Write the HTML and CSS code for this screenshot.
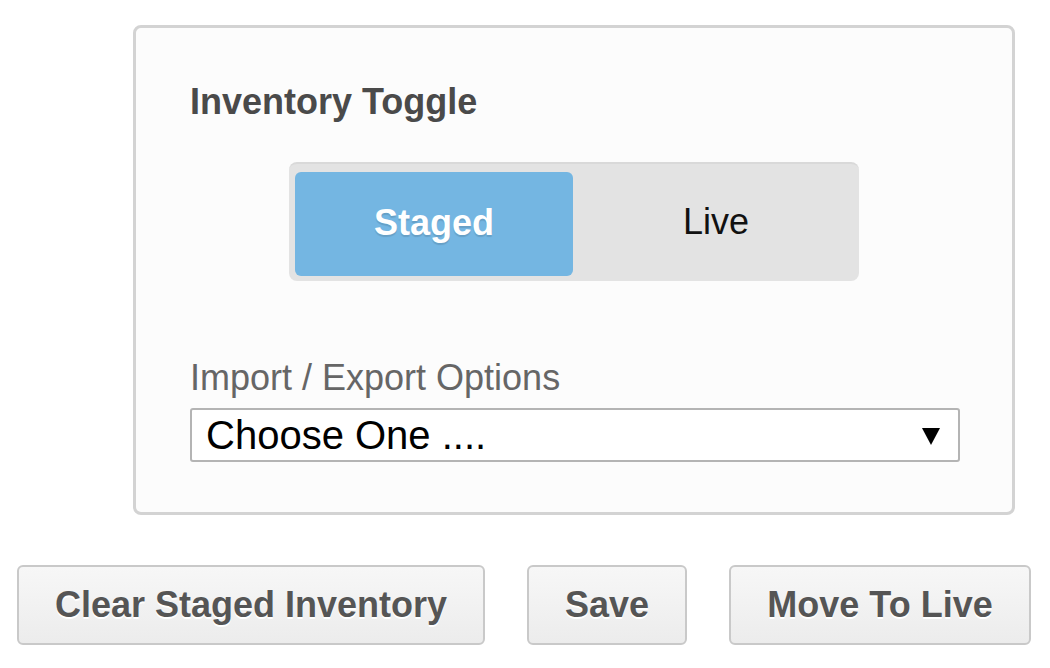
FILE: index.html
```html
<!DOCTYPE html>
<html lang="en">
<head>
<meta charset="utf-8">
<title>Inventory</title>
<link rel="stylesheet" href="styles.css">
</head>
<body>
<div class="page">
  <section class="panel">
    <h2 class="panel-title">Inventory Toggle</h2>
    <div class="toggle">
      <button class="toggle-opt is-active" type="button">Staged</button>
      <button class="toggle-opt" type="button">Live</button>
    </div>
    <label class="field-label">Import / Export Options</label>
    <div class="select">
      <span class="select-value">Choose One ....</span>
      <svg class="select-arrow" width="18" height="18" viewBox="0 0 18 18" aria-hidden="true"><polygon points="0,1 18,1 9,18" fill="#000"/></svg>
    </div>
  </section>
  <div class="actions">
    <button class="btn btn-clear" type="button">Clear Staged Inventory</button>
    <button class="btn btn-save" type="button">Save</button>
    <button class="btn btn-live" type="button">Move To Live</button>
  </div>
</div>
</body>
</html>
```

FILE: styles.css
```css
* { box-sizing: border-box; }
html, body { margin: 0; padding: 0; background: #ffffff; }
body { font-family: "Liberation Sans", Arial, sans-serif; }

.page {
  padding-top: 25px;
}

.panel {
  margin-left: 133px;
  width: 882px;
  height: 490px;
  border: 3px solid #d3d3d3;
  border-radius: 8px;
  background: #fcfcfc;
  padding: 54px 54px 0 54px;
}

.panel-title {
  margin: 0;
  font-size: 36px;
  line-height: 40px;
  font-weight: bold;
  color: #4a4a4a;
}

.toggle {
  margin: 40px auto 0;
  width: 570px;
  height: 119px;
  display: flex;
  padding: 8px 0 5px 6px;
  background: #e3e3e3;
  border-radius: 8px;
  border-top: 2px solid #d9d9d9;
}

.toggle-opt {
  font-family: "Liberation Sans", Arial, sans-serif;
  border: 0;
  background: transparent;
  font-size: 36px;
  color: #111;
  flex: 1;
  padding: 0 0 4px;
  border-radius: 6px;
}

.toggle-opt.is-active {
  flex: 0 0 278px;
  background: #74b6e2;
  color: #ffffff;
  font-weight: bold;
  padding: 0 0 2px;
  text-shadow: 0 2px 1px rgba(0, 0, 0, 0.12);
}

.field-label {
  display: block;
  margin-top: 77px;
  font-size: 36px;
  line-height: 40px;
  color: #666666;
}

.select {
  margin-top: 10px;
  height: 54px;
  width: 770px;
  border: 2px solid #b4b4b4;
  border-radius: 3px;
  background: #ffffff;
  display: flex;
  align-items: center;
  padding: 0 18px 0 14px;
}

.select-value {
  flex: 1;
  font-size: 40px;
  line-height: 46px;
  color: #000;
}

.select-arrow {
  display: block;
  margin-top: 2px;
}

.actions {
  display: flex;
  gap: 42px;
  margin-top: 50px;
  padding-left: 17px;
}

.btn {
  font-family: "Liberation Sans", Arial, sans-serif;
  height: 80px;
  font-size: 36px;
  font-weight: bold;
  color: #555555;
  text-shadow: 0 2px 0 #ffffff;
  background: linear-gradient(#f7f7f7, #ececec);
  border: 2px solid #c9c9c9;
  border-radius: 6px;
  padding: 0;
}

.btn-clear { width: 468px; }
.btn-save { width: 160px; }
.btn-live { width: 302px; }
```
